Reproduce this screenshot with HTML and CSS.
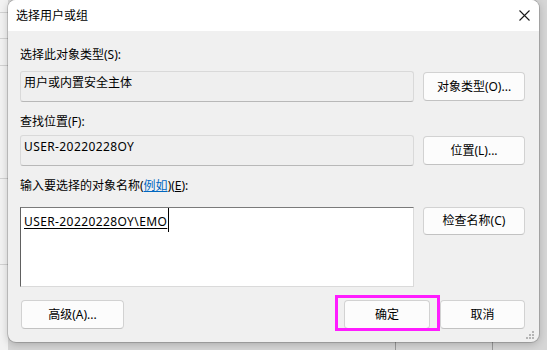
FILE: index.html
```html
<!DOCTYPE html>
<html lang="zh-CN">
<head>
<meta charset="utf-8">
<title>选择用户或组</title>
<link rel="stylesheet" href="styles.css">
</head>
<body>
<div class="desk">
  <div class="dialog">
    <div class="titlebar">
      <span class="title">选择用户或组</span>
      <svg class="close" width="11" height="11" viewBox="0 0 11 11"><path d="M0.5 0.5 L10.5 10.5 M10.5 0.5 L0.5 10.5" stroke="#1a1a1a" stroke-width="1.1" fill="none"/></svg>
    </div>
    <div class="content">
      <div class="label l1">选择此对象类型(S):</div>
      <div class="row r1">
        <div class="field">用户或内置安全主体</div>
        <button class="btn">对象类型(O)...</button>
      </div>
      <div class="label l2">查找位置(F):</div>
      <div class="row r2">
        <div class="field latin">USER-20220228OY</div>
        <button class="btn">位置(L)...</button>
      </div>
      <div class="label l3">输入要选择的对象名称(<span class="link">例如</span>)(<u>E</u>):</div>
      <div class="row r3">
        <div class="area"><span class="typed latin">USER-20220228OY\EMO</span><span class="caret"></span></div>
        <button class="btn btn-top">检查名称(C)</button>
      </div>
      <div class="footer">
        <button class="btn adv">高级(A)...</button>
        <button class="btn ok">确定</button>
        <button class="btn cancel">取消</button>
      </div>
    </div>
    <svg class="grip" width="9" height="9" viewBox="0 0 9 9">
      <rect x="6" y="0" width="2" height="2" fill="#b5b5b5"/>
      <rect x="3" y="3" width="2" height="2" fill="#b5b5b5"/>
      <rect x="6" y="3" width="2" height="2" fill="#b5b5b5"/>
      <rect x="0" y="6" width="2" height="2" fill="#b5b5b5"/>
      <rect x="3" y="6" width="2" height="2" fill="#b5b5b5"/>
      <rect x="6" y="6" width="2" height="2" fill="#b5b5b5"/>
    </svg>
    <div class="highlight"></div>
  </div>
</div>
</body>
</html>
```
FILE: styles.css
```css
* { box-sizing: border-box; }

html, body {
  margin: 0;
  padding: 0;
}

body {
  width: 547px;
  height: 350px;
  overflow: hidden;
  font-family: "Noto Sans", "Noto Sans CJK SC", sans-serif;
  font-size: 12px;
  color: #000;
  background: #e4e4e4;
}

.desk {
  width: 547px;
  height: 350px;
  padding-left: 8px;
  background:
    linear-gradient(#d2d2d2, #d2d2d2) 0 12px / 8px 1px no-repeat,
    linear-gradient(#d2d2d2, #d2d2d2) 0 38px / 8px 1px no-repeat,
    linear-gradient(#d2d2d2, #d2d2d2) 0 65px / 8px 1px no-repeat,
    linear-gradient(#d2d2d2, #d2d2d2) 0 178px / 8px 1px no-repeat,
    linear-gradient(#d2d2d2, #d2d2d2) 0 264px / 8px 1px no-repeat,
    linear-gradient(#9a9a9a, #9a9a9a) 395px 342px / 1px 8px no-repeat,
    linear-gradient(#9a9a9a, #9a9a9a) 492px 342px / 1px 8px no-repeat,
    linear-gradient(90deg, #f2f2f2 0, #f2f2f2 8px, #d6d6d6 8px);
}

.dialog {
  position: relative;
  width: 531px;
  height: 342px;
  background: #f0f0f0;
  border-radius: 8px;
  overflow: hidden;
  box-shadow: 0 0 0 1px rgba(0, 0, 0, 0.16), 0 2px 8px rgba(0, 0, 0, 0.22);
}

.titlebar {
  height: 31px;
  background: #ffffff;
  display: flex;
  align-items: center;
  padding-left: 8px;
}

.title {
  line-height: 16px;
  margin-top: 1px;
}

.close {
  display: block;
  margin-left: auto;
  margin-right: 9px;
}

.content {
  padding: 16px 14px 0 12px;
}

.label {
  line-height: 16px;
  height: 16px;
  white-space: nowrap;
}

.l1 { margin-bottom: 8px; }
.l2 { margin-top: 12px; margin-bottom: 5px; }
.l3 { margin-top: 12px; margin-bottom: 13px; }

.link {
  color: #0067c0;
  text-decoration: underline;
}

.latin {
  letter-spacing: 0.4px;
}

.row {
  display: grid;
  grid-template-columns: 394px 102px;
  column-gap: 9px;
  align-items: center;
}

.field {
  height: 31px;
  background: #efefef;
  border: 1px solid #d9d9d9;
  border-bottom-color: #b8b8b8;
  border-radius: 3px;
  padding: 3px 3px 0;
  line-height: 16px;
  white-space: nowrap;
}

.btn {
  font-family: inherit;
  font-size: 12px;
  color: #000;
  height: 29px;
  padding: 0;
  background: #fcfcfc;
  border: 1px solid #d2d2d2;
  border-bottom-color: #c2c2c2;
  border-radius: 4px;
  line-height: 16px;
  text-align: center;
}

.r3 {
  align-items: start;
}

.btn-top {
  height: 28px;
}

.area {
  height: 80px;
  background: #ffffff;
  border: 1px solid #dadada;
  border-top-color: #7a7a7a;
  border-left-color: #606060;
  padding: 6px 0 0 3px;
  line-height: 16px;
  display: flex;
  align-items: flex-start;
}

.typed {
  text-decoration: underline;
  text-underline-offset: 2px;
  white-space: nowrap;
}

.caret {
  display: block;
  width: 1px;
  height: 24px;
  margin-top: -6px;
  margin-left: 1px;
  background: #000;
}

.footer {
  display: flex;
  margin-top: 13px;
  align-items: center;
}

.adv {
  width: 103px;
  margin-left: 1px;
}

.ok {
  width: 86px;
  margin-left: auto;
  margin-right: 10px;
}

.cancel {
  width: 85px;
}

.grip {
  position: absolute;
  right: 4px;
  bottom: 2px;
}

.highlight {
  position: absolute;
  left: 327px;
  top: 295px;
  width: 105px;
  height: 36px;
  border: 3px solid #ff1cff;
}
```
